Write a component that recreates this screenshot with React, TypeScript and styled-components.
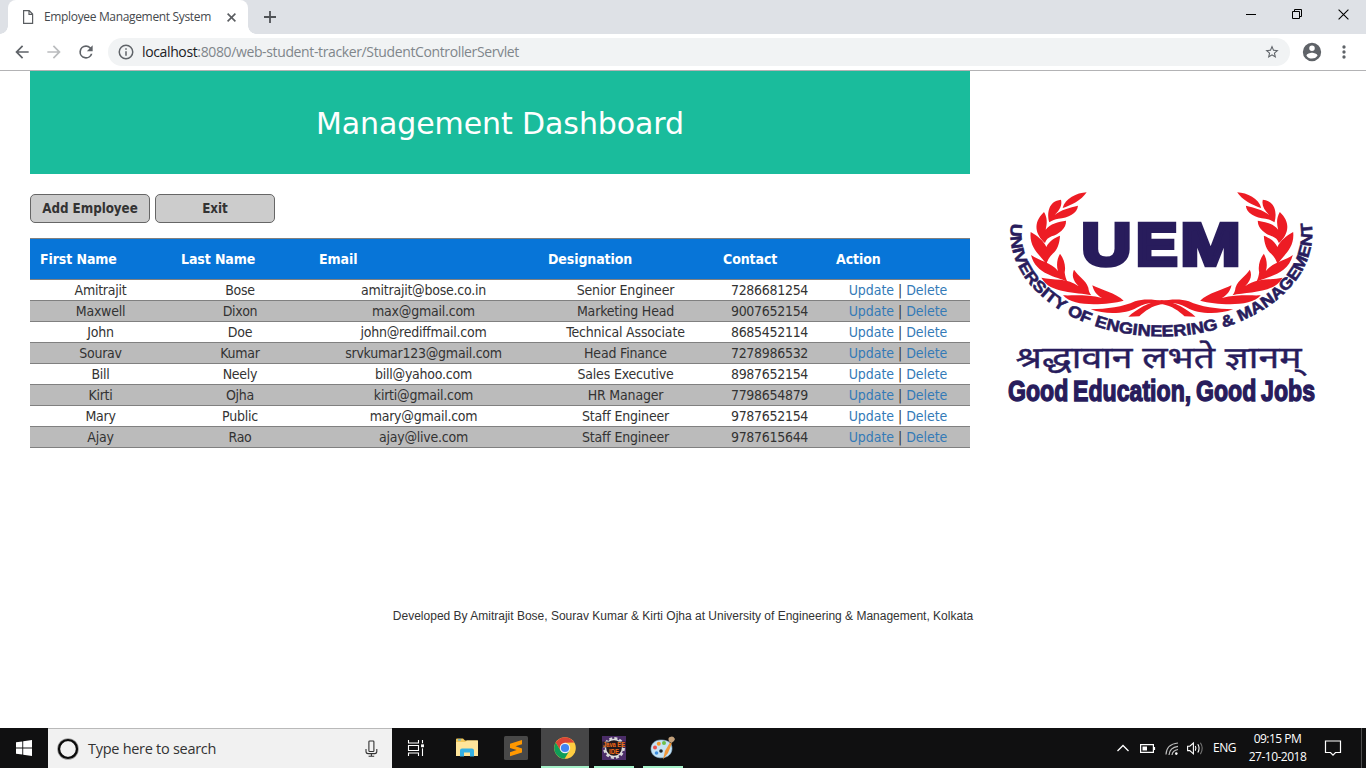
import React from "react";
import styled, { createGlobalStyle } from "styled-components";

const GlobalStyle = createGlobalStyle`
  * { box-sizing: border-box; }
  html, body { margin: 0; padding: 0; background: #fff; overflow: hidden; }
`;

const ui = `"Open Sans", "Noto Sans", sans-serif`;
const tahoma = `"DejaVu Sans Condensed", "DejaVu Sans", sans-serif`;
const verdana = `"DejaVu Sans", sans-serif`;

const Screen = styled.div`
  width: 1366px;
  height: 768px;
  display: flex;
  flex-direction: column;
  background: #fff;
  font-family: ${ui};
`;

/* ---------- browser chrome ---------- */

const TabStrip = styled.header`
  height: 34px;
  flex: none;
  display: flex;
  background: #dee1e6;
  padding-left: 8px;
`;

const Tab = styled.div`
  width: 240px;
  height: 34px;
  display: flex;
  align-items: center;
  padding: 0 12px 0 14px;
  background: #fff;
  border-radius: 8px 8px 0 0;
  position: relative;

  &::before,
  &::after {
    content: "";
    position: absolute;
    bottom: 0;
    width: 8px;
    height: 8px;
  }
  &::before {
    left: -8px;
    background: radial-gradient(circle at 0 0, #dee1e6 7.5px, #fff 8px);
  }
  &::after {
    right: -8px;
    background: radial-gradient(circle at 100% 0, #dee1e6 7.5px, #fff 8px);
  }
`;

const TabTitle = styled.span`
  flex: 1;
  margin-left: 10px;
  font: 12px/16px ${ui};
  letter-spacing: -0.34px;
  color: #45494d;
  white-space: nowrap;
`;

const NewTab = styled.div`
  display: flex;
  align-items: center;
  padding-left: 15px;
  flex: 1;
`;

const WindowControls = styled.div`
  display: flex;
  height: 28px;
`;

const WindowButton = styled.div`
  width: 46px;
  display: flex;
  align-items: center;
  justify-content: center;
`;

const Toolbar = styled.nav`
  height: 37px;
  flex: none;
  display: flex;
  align-items: center;
  padding: 0 12px 0 12px;
  border-bottom: 1px solid #b3b3b5;
  background: #fff;
`;

const NavIcons = styled.div`
  display: flex;
  gap: 12px;
  width: 96px;
`;

const AddressBar = styled.div`
  width: 1182px;
  height: 28px;
  border-radius: 14px;
  background: #f1f3f4;
  display: flex;
  align-items: center;
  padding: 0 10px 0 9px;
`;

const Url = styled.span`
  flex: 1;
  margin-left: 7px;
  font: 14px/20px ${ui};
  letter-spacing: -0.37px;
  color: #80868b;
  white-space: nowrap;

  b {
    font-weight: 400;
    color: #202124;
  }
`;

const ToolbarEnd = styled.div`
  flex: 1;
  display: flex;
  justify-content: space-between;
  align-items: center;
  padding-left: 11px;
`;

/* ---------- page ---------- */

const Page = styled.main`
  height: 657px;
  flex: none;
  display: flex;
  flex-direction: column;
`;

const Columns = styled.div`
  display: flex;
  height: 537px;
  padding-left: 30px;
`;

const Dashboard = styled.section`
  width: 940px;
`;

const Banner = styled.h1`
  margin: 0 0 20px;
  height: 103px;
  background: #1abc9c;
  color: #fff;
  font: 400 30px/105px ${verdana};
  text-align: center;
  letter-spacing: -0.1px;
`;

const ButtonRow = styled.div`
  display: flex;
  gap: 5px;
  margin-bottom: 15px;
`;

const ActionButton = styled.button`
  width: 120px;
  height: 29px;
  padding: 0;
  border: 1px solid #666;
  border-radius: 5px;
  background: #ccc;
  color: #333;
  font: bold 13.3px/18px ${tahoma};
  letter-spacing: -0.05px;
`;

const Table = styled.table`
  width: 940px;
  table-layout: fixed;
  border-collapse: separate;
  border-spacing: 0;
  border-top: 1px solid #808080;
  font-family: ${tahoma};
  font-size: 14px;
`;

const HeadCell = styled.th<{ $w: number }>`
  width: ${(p) => p.$w}px;
  height: 41px;
  padding: 0 0 0 10px;
  background: #0775d8;
  border-bottom: 1px solid #808080;
  color: #fff;
  text-align: left;
  font-weight: bold;
  line-height: 20px;
  letter-spacing: -0.1px;
  white-space: nowrap;
`;

const Row = styled.tr`
  &:nth-child(even) {
    background: #bbb;
  }
`;

const Cell = styled.td<{ $spacing?: number }>`
  height: 21px;
  padding: 0;
  border-bottom: 1px solid #808080;
  color: #333;
  text-align: center;
  line-height: 20px;
  letter-spacing: ${(p) => p.$spacing ?? -0.3}px;
  white-space: nowrap;
`;

const Link = styled.a`
  color: #337ab7;
`;

const LogoColumn = styled.aside`
  padding: 114px 0 0 30px;
`;

const Credits = styled.footer`
  text-align: center;
  font: 12px/16px "Liberation Sans", Arial, sans-serif;
  color: #333;
`;

/* ---------- taskbar ---------- */

const Taskbar = styled.footer`
  height: 40px;
  flex: none;
  display: flex;
  background: #101011;
  color: #fff;
`;

const StartButton = styled.div`
  width: 48px;
  display: flex;
  align-items: center;
  justify-content: center;
`;

const SearchBox = styled.div`
  width: 344px;
  display: flex;
  align-items: center;
  padding: 0 14px 0 8px;
  background: #f1f1f1;
  border-top: 1px solid #b9b9b9;
`;

const SearchText = styled.span`
  flex: 1;
  margin-left: 8px;
  font: 14.5px/20px ${ui};
  letter-spacing: -0.28px;
  color: #333;
`;

const AppButton = styled.div<{ $state?: "open" | "active"; $w?: number }>`
  width: ${(p) => p.$w ?? 48}px;
  height: 40px;
  display: flex;
  align-items: center;
  justify-content: center;
  background: ${(p) => (p.$state === "active" ? "#464647" : "transparent")};
  box-shadow: ${(p) => (p.$state ? "inset 0 -2px #a5f0c8" : "none")};
`;

const Apps = styled.div`
  flex: 1;
  display: flex;
`;

const Spacer = styled.div<{ $w: number }>`
  width: ${(p) => p.$w}px;
`;

const Tray = styled.div`
  display: flex;
  align-items: center;
  width: 250px;
  font: 12px/18px ${ui};
`;

const TrayIcons = styled.div`
  display: flex;
  align-items: center;
  width: 97px;
`;

const Language = styled.span`
  width: 23px;
  letter-spacing: -0.5px;
`;

const Clock = styled.div`
  width: 83px;
  text-align: center;
  letter-spacing: -0.5px;
  white-space: nowrap;
`;

const ShowDesktop = styled.div`
  align-self: stretch;
  width: 5px;
  margin-left: auto;
  border-left: 1px solid #4d4d4e;
`;

/* ---------- drawings ---------- */

const Leaves = () => (
  <g fill="#ed1c24">
    <path d="M200 22C170 24 135 40 128 69C152 62 185 46 200 22Z" />
    <path d="M88 112C80 85 85 48 123 44C127 60 120 74 104 90C122 74 150 68 174 62C172 85 145 98 115 101C105 103 97 106 88 112Z" />
    <path d="M75 174C48 150 36 115 72 81C82 98 82 114 77 134C90 116 115 111 138 107C140 130 115 148 95 154C85 158 78 164 75 174Z" />
    <path d="M79 240C70 215 26 195 32 141C52 152 72 168 79 186C88 167 105 158 120 152C119 175 112 195 98 206C88 216 82 226 79 240Z" />
    <path d="M142 290C110 274 48 270 33 210C58 228 94 232 114 258C108 240 112 220 120 206C132 222 138 242 134 262C135 272 138 282 142 290Z" />
    <path d="M214 331C170 320 90 327 64 278C100 286 144 278 176 304C158 285 155 270 162 254C175 274 196 283 205 308C206 318 209 325 214 331Z" />
    <path d="M311 347C260 360 160 368 129 331C160 332 205 328 246 339C228 330 220 315 217 301C240 313 289 325 311 347Z" />
    <path d="M212 373C260 372 310 366 345 349C370 341 400 343 426 348L426 358C400 351 380 353 350 368C320 386 260 391 212 373Z" />
    <path d="M325 395C350 372 385 352 426 345L426 357C395 363 375 378 358 394Z" />
  </g>
);

const initials: [string, number, number][] = [
  ["U", 1081.6, 49.8],
  ["E", 1136, 41.5],
  ["M", 1180.4, 60],
];

const Logo = () => (
  <svg width="340" height="240" viewBox="1000 185 340 240" display="block">
    <g transform="translate(1020 185) scale(0.33333)">
      <Leaves />
      <g transform="translate(851.5 0) scale(-1 1)">
        <Leaves />
      </g>
    </g>
    <defs>
      <path id="crest-arc" d="M1011.4 223.5A150.800 102.500 0 1 0 1311.400 223.500" />
    </defs>
    <g fill="#281c5c" fontFamily="'Liberation Sans', Arial, sans-serif" fontWeight="bold">
      <text fontSize="16" stroke="#281c5c" strokeWidth="0.6" textLength="423" lengthAdjust="spacingAndGlyphs">
        <textPath href="#crest-arc" textLength="423" lengthAdjust="spacingAndGlyphs">
          UNIVERSITY OF ENGINEERING &amp; MANAGEMENT
        </textPath>
      </text>
      {initials.map(([letter, x, w]) => (
        <text
          key={letter}
          x={x}
          y="264.8"
          fontSize="59.5"
          stroke="#281c5c"
          strokeWidth="4.5"
          textLength={w}
          lengthAdjust="spacingAndGlyphs"
        >
          {letter}
        </text>
      ))}
      <text
        x="1015.5"
        y="367.5"
        fontSize="30"
        fontWeight="400"
        stroke="#281c5c"
        strokeWidth="0.4"
        fontFamily="'Noto Sans Devanagari', 'Noto Sans', sans-serif"
        textLength="286"
        lengthAdjust="spacingAndGlyphs"
      >
        श्रद्धावान लभते ज्ञानम्
      </text>
      <text
        x="1008"
        y="400.8"
        fontSize="29"
        stroke="#281c5c"
        strokeWidth="1.4"
        textLength="307"
        lengthAdjust="spacingAndGlyphs"
        wordSpacing="-2"
      >
        Good Education, Good Jobs
      </text>
    </g>
  </svg>
);

const PageIcon = () => (
  <svg width="12" height="16" viewBox="0 0 12 16" fill="none" stroke="#5a5d61" strokeWidth="1.2">
    <path d="M1.6 1.600h5.600l3.400 3.500v9.300h-9zM7 1.600v3.700h3.600" />
  </svg>
);

const Cross = ({ size, w, color }: { size: number; w: number; color: string }) => (
  <svg width={size} height={size} viewBox={`0 0 ${size} ${size}`} stroke={color} strokeWidth={w}>
    <path d={`M.6 .6L${size - 0.6} ${size - 0.6}M${size - 0.6} .6L.6 ${size - 0.6}`} />
  </svg>
);

const MaterialIcon = ({ d, color = "#5f6368", size = 20 }: { d: string; color?: string; size?: number }) => (
  <svg width={size} height={size} viewBox="0 0 24 24" fill={color}>
    <path d={d} />
  </svg>
);

const back = "M20 11H7.83l5.59-5.59L12 4l-8 8 8 8 1.41-1.41L7.83 13H20v-2z";
const forward = "M12 4l-1.41 1.41L16.17 11H4v2h12.17l-5.58 5.59L12 20l8-8z";
const reload =
  "M17.65 6.35A7.96 7.96 0 0 0 12 4a8 8 0 1 0 7.73 10h-2.08A6 6 0 1 1 12 6c1.66 0 3.14.69 4.22 1.78L13 11h7V4z";
const info =
  "M11 7h2v2h-2zm0 4h2v6h-2zm1-9a10 10 0 1 0 0 20 10 10 0 0 0 0-20zm0 18a8 8 0 1 1 0-16 8 8 0 0 1 0 16z";
const star =
  "M22 9.24l-7.19-.62L12 2 9.19 8.63 2 9.24l5.46 4.73L5.82 21 12 17.27 18.18 21l-1.63-7.03zM12 15.4l-3.76 2.27 1-4.28-3.32-2.88 4.38-.38L12 6.1l1.71 4.04 4.38.38-3.32 2.88 1 4.28z";
const person =
  "M12 2a10 10 0 1 0 0 20 10 10 0 0 0 0-20zm0 3a3 3 0 1 1 0 6 3 3 0 0 1 0-6zm0 14.2a7.2 7.2 0 0 1-6-3.22c.03-1.99 4-3.08 6-3.08s5.97 1.09 6 3.08a7.2 7.2 0 0 1-6 3.22z";
const dots =
  "M12 8a2 2 0 1 0 0-4 2 2 0 0 0 0 4zm0 2a2 2 0 1 0 0 4 2 2 0 0 0 0-4zm0 6a2 2 0 1 0 0 4 2 2 0 0 0 0-4z";

const WindowsIcon = () => (
  <svg width="16" height="16" viewBox="0 0 16 16" fill="#fff">
    <path d="M0 2.3L6.3 1.4V7.5H0zM7.2 1.2L16 0V7.5H7.2zM0 8.4H6.3V14.6L0 13.7zM7.2 8.4H16V16L7.2 14.8z" />
  </svg>
);

const CortanaIcon = () => (
  <svg width="24" height="24" viewBox="0 0 24 24" fill="none">
    <circle cx="12" cy="12" r="9.3" stroke="#9b9b9b" strokeWidth="3" />
    <circle cx="12" cy="12" r="9" stroke="#0a0a0a" strokeWidth="2.2" />
  </svg>
);

const MicIcon = () => (
  <svg width="13" height="18" viewBox="0 0 13 18" fill="none" stroke="#333" strokeWidth="1.1">
    <rect x="3.9" y="1" width="5" height="10.5" rx="0.8" />
    <path d="M1 9v2.6q0 2 2 2h6.8q2 0 2-2V9M6.4 13.6v2.6M3.6 16.2h5.6" />
  </svg>
);

const TaskViewIcon = () => (
  <svg width="18" height="16" viewBox="0 0 18 16" fill="none" stroke="#fff" strokeWidth="1.1">
    <path d="M1.5 0v3h10V0M1.500 16v-3h10V16M1.500 5.500h10v5h-10zM15.500 0v16" />
    <rect x="13.500" y="3.800" width="4" height="4" fill="#fff" stroke="#101011" />
  </svg>
);

const FolderIcon = () => (
  <svg width="22" height="20" viewBox="0 0 22 20">
    <path d="M0 1.500q0-1 1-1h6l2 2h12q1 0 1 1V17q0 1-1 1H1q-1 0-1-1z" fill="#f2c75a" />
    <path d="M0 4h9l2-1.500h11v15.500H0z" fill="#ffe59a" />
    <path d="M2 1.300h3v1.200H2z" fill="#4cb4e7" />
    <path d="M4 18.500v-6q0-2 2-2h10q2 0 2 2v6h-4v-4H8v4z" fill="#35b1e4" />
  </svg>
);

const SublimeIcon = () => (
  <svg width="24" height="24" viewBox="0 0 24 24">
    <rect width="24" height="24" rx="1.5" fill="#484848" />
    <path d="M6 7.7L18 4v4.2l-6.5 2.1L18 12.500v4.100L6 20.200v-4l6.600-2.100L6 12z" fill="#ff9800" />
  </svg>
);

const ChromeIcon = () => (
  <svg width="22" height="22" viewBox="0 0 22 22">
    <circle cx="11" cy="11" r="10.8" fill="#ffcd41" />
    <path d="M1.65 5.6A10.8 10.8 0 0 1 20.35 5.6L11 5.8 6.4 13.6z" fill="#db4437" />
    <path d="M1.65 5.6A10.8 10.8 0 0 0 10.6 21.8L15.5 13.6 6.5 13.6z" fill="#0f9d58" />
    <circle cx="11" cy="11" r="5.2" fill="#f1f1f1" />
    <circle cx="11" cy="11" r="4.1" fill="#4285f4" />
  </svg>
);

const JavaIcon = () => (
  <svg width="24" height="24" viewBox="0 0 24 24">
    <rect width="24" height="24" fill="#4b2d68" />
    <circle cx="12" cy="12" r="9.6" fill="none" stroke="#d8d8d8" strokeWidth="2.6" strokeDasharray="3 2.03" />
    <circle cx="12" cy="12" r="8.5" fill="#21181d" stroke="#ddd" strokeWidth="1.4" />
    <path d="M0 5.500h24v6H0z" fill="#21181d" fillOpacity="0.75" />
    <g fill="#f36b16" fontFamily="'Liberation Sans', sans-serif" fontWeight="bold">
      <text x="1" y="11" fontSize="6.500" textLength="22" lengthAdjust="spacingAndGlyphs">
        Java EE
      </text>
      <text x="7" y="17.500" fontSize="6.500" textLength="10" lengthAdjust="spacingAndGlyphs">
        IDE
      </text>
    </g>
  </svg>
);

const PaintIcon = () => (
  <svg width="26" height="24" viewBox="0 0 26 24">
    <path
      d="M12 4C5 3.5 1 8 1 13c0 5 4 8.5 9 8.8 8 .4 12-4 12-9.300C22 7 18 4.300 12 4z"
      fill="#c5e3f4"
      stroke="#8fb9d6"
      strokeWidth="0.6"
    />
    <circle cx="11" cy="15" r="1.800" fill="#20262b" />
    <circle cx="5" cy="11.500" r="2" fill="#e9504a" />
    <circle cx="8.800" cy="7.800" r="2" fill="#f39a2e" />
    <circle cx="14" cy="7" r="2" fill="#6cc04a" />
    <circle cx="6.500" cy="17" r="1.800" fill="#3d8ee0" />
    <path d="M13 23.500L15 15 20 6.500l1.800 1L18 17z" fill="#f0973a" />
    <path d="M19 5.500Q17.500 1.500 20 1q2-1 3.500 0l1.500 2q-.5 2.500-3.500 4z" fill="#c2a07b" />
  </svg>
);

const TrayGlyphs = () => (
  <svg width="90" height="20" viewBox="0 0 90 20" fill="none" stroke="#fff" strokeWidth="1.3">
    <path d="M1.500 13L7 7.500 12.500 13" />
    <path d="M24.600 6.600h12.800v7.800H24.600zM38.500 9v3" strokeWidth="1.200" />
    <path d="M26.500 8.500h4.500v4h-4.500z" fill="#fff" stroke="none" />
    <g strokeWidth="1.200">
      <path d="M50 16.500Q50.500 6 62 5M53 17Q53.500 9.500 62 8.300M56 17Q56.500 12.500 62 11.500" stroke="#bdbdbd" />
      <circle cx="60.300" cy="15.600" r="1.300" fill="#fff" stroke="none" />
    </g>
    <path d="M71.600 8.200h2.200L77.400 5v10.800l-3.600-3.200h-2.200z" strokeWidth="1.100" />
    <path d="M79.300 8q1.400 2.400 0 4.800M81.800 6.300q2.600 4 0 8.200" strokeWidth="1.100" />
    <path d="M84.400 4.700q3.700 5.600 0 11.400" stroke="#777" strokeWidth="1.100" />
  </svg>
);

const NotificationIcon = () => (
  <svg width="18" height="18" viewBox="0 0 18 18" fill="none" stroke="#fff" strokeWidth="1.2">
    <path d="M1.500 2h15v11.500h-5L9 16.200 6.500 13.500h-5z" />
  </svg>
);

/* ---------- data ---------- */

const columns: [string, number, number][] = [
  ["First Name", 141, -0.25],
  ["Last Name", 138, -0.25],
  ["Email", 229, -0.24],
  ["Designation", 175, -0.18],
  ["Contact", 113, -0.3],
  ["Action", 144, -0.04],
];

const employees = [
  ["Amitrajit", "Bose", "amitrajit@bose.co.in", "Senior Engineer", "7286681254"],
  ["Maxwell", "Dixon", "max@gmail.com", "Marketing Head", "9007652154"],
  ["John", "Doe", "john@rediffmail.com", "Technical Associate", "8685452114"],
  ["Sourav", "Kumar", "srvkumar123@gmail.com", "Head Finance", "7278986532"],
  ["Bill", "Neely", "bill@yahoo.com", "Sales Executive", "8987652154"],
  ["Kirti", "Ojha", "kirti@gmail.com", "HR Manager", "7798654879"],
  ["Mary", "Public", "mary@gmail.com", "Staff Engineer", "9787652154"],
  ["Ajay", "Rao", "ajay@live.com", "Staff Engineer", "9787615644"],
];

export default function App() {
  return (
    <Screen>
      <GlobalStyle />
      <TabStrip>
        <Tab>
          <PageIcon />
          <TabTitle>Employee Management System</TabTitle>
          <Cross size={9} w={1.6} color="#5a5d61" />
        </Tab>
        <NewTab>
          <svg width="14" height="14" viewBox="0 0 14 14" stroke="#4f5256" strokeWidth="1.8">
            <path d="M1 7h12M7 1v12" />
          </svg>
        </NewTab>
        <WindowControls>
          <WindowButton>
            <svg width="10" height="10" viewBox="0 0 10 10" fill="#000">
              <path d="M0 5h10v1H0z" />
            </svg>
          </WindowButton>
          <WindowButton>
            <svg width="10" height="10" viewBox="0 0 10 10" fill="none" stroke="#000">
              <path d="M.5 2.500h7v7h-7zM2.500 2.500v-2h7v7h-2" />
            </svg>
          </WindowButton>
          <WindowButton>
            <Cross size={11} w={1.1} color="#000" />
          </WindowButton>
        </WindowControls>
      </TabStrip>

      <Toolbar>
        <NavIcons>
          <MaterialIcon d={back} size={20} />
          <MaterialIcon d={forward} size={20} color="#babcbe" />
          <MaterialIcon d={reload} size={20} />
        </NavIcons>
        <AddressBar>
          <MaterialIcon d={info} size={18} />
          <Url>
            <b>localhost</b>:8080/web-student-tracker/StudentControllerServlet
          </Url>
          <MaterialIcon d={star} size={16} />
        </AddressBar>
        <ToolbarEnd>
          <MaterialIcon d={person} size={22} />
          <MaterialIcon d={dots} size={20} />
        </ToolbarEnd>
      </Toolbar>

      <Page>
        <Columns>
          <Dashboard>
            <Banner>Management Dashboard</Banner>
            <ButtonRow>
              <ActionButton>Add Employee</ActionButton>
              <ActionButton>Exit</ActionButton>
            </ButtonRow>
            <Table>
              <thead>
                <tr>
                  {columns.map(([label, w]) => (
                    <HeadCell key={label} $w={w}>
                      {label}
                    </HeadCell>
                  ))}
                </tr>
              </thead>
              <tbody>
                {employees.map((e) => (
                  <Row key={e[2]}>
                    {e.map((value, i) => (
                      <Cell key={i} $spacing={columns[i][2]}>
                        {value}
                      </Cell>
                    ))}
                    <Cell $spacing={columns[5][2]}>
                      <Link>Update</Link> | <Link>Delete</Link>
                    </Cell>
                  </Row>
                ))}
              </tbody>
            </Table>
          </Dashboard>
          <LogoColumn>
            <Logo />
          </LogoColumn>
        </Columns>
        <Credits>
          Developed By Amitrajit Bose, Sourav Kumar &amp; Kirti Ojha at University of Engineering &amp; Management,
          Kolkata
        </Credits>
      </Page>

      <Taskbar>
        <StartButton>
          <WindowsIcon />
        </StartButton>
        <SearchBox>
          <CortanaIcon />
          <SearchText>Type here to search</SearchText>
          <MicIcon />
        </SearchBox>
        <Apps>
          <AppButton>
            <TaskViewIcon />
          </AppButton>
          <Spacer $w={3} />
          <AppButton>
            <FolderIcon />
          </AppButton>
          <Spacer $w={1} />
          <AppButton>
            <SublimeIcon />
          </AppButton>
          <Spacer $w={1} />
          <AppButton $state="active">
            <ChromeIcon />
          </AppButton>
          <Spacer $w={5} />
          <AppButton $state="open" $w={40}>
            <JavaIcon />
          </AppButton>
          <Spacer $w={9} />
          <AppButton $state="open" $w={40}>
            <PaintIcon />
          </AppButton>
        </Apps>
        <Tray>
          <TrayIcons>
            <TrayGlyphs />
          </TrayIcons>
          <Language>ENG</Language>
          <Clock>
            09:15 PM
            <br />
            27-10-2018
          </Clock>
          <Spacer $w={5} />
          <NotificationIcon />
          <ShowDesktop />
        </Tray>
      </Taskbar>
    </Screen>
  );
}
